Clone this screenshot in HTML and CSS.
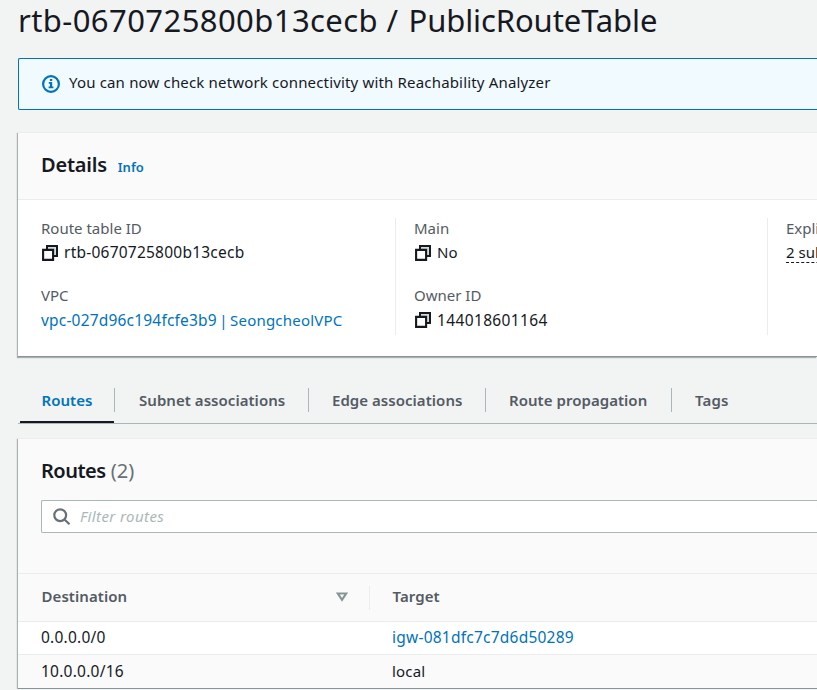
FILE: index.html
```html
<!DOCTYPE html>
<html lang="en">
<head>
<meta charset="utf-8">
<title>PublicRouteTable</title>
<link rel="stylesheet" href="styles.css">
</head>
<body>
<svg class="defs" aria-hidden="true">
  <symbol id="copy" viewBox="0 0 16 16"><path d="M5 4.5V1h10v10h-3.500" fill="#d5dbdb" stroke="currentColor" stroke-width="2"/><path d="M1.1 4.900h10v10h-10z" fill="#fff" stroke="currentColor" stroke-width="2.1"/></symbol>
</svg>
<main class="page">
  <h1 class="title"><span class="t-title-id">rtb-0670725800b13cecb /</span> <span class="t-title-name">PublicRouteTable</span></h1>

  <section class="flash">
    <svg class="flash-icon" viewBox="0 0 18 18"><circle cx="9" cy="9" r="7.9" fill="none" stroke="currentColor" stroke-width="2.2"/><path d="M7.9 4h2.3v2.1H7.9zM6.8 7.1h3.4v4.4h1.2v1.7H6.6v-1.7h1.3V8.8H6.8z" fill="currentColor"/></svg>
    <span class="t-flash">You can now check network connectivity with Reachability Analyzer</span>
  </section>

  <section class="panel details">
    <header class="details-head">
      <h2><span class="t-details">Details</span></h2>
      <a class="info">Info</a>
    </header>
    <div class="columns">
      <div class="column">
        <div class="pair"><div class="label t-rtid">Route table ID</div><div class="value"><svg class="copy"><use href="#copy"/></svg><span class="ident">rtb-0670725800b13cecb</span></div></div>
        <div class="pair"><div class="label">VPC</div><div class="value"><a class="t-vpc"><span class="ident">vpc-027d96c194fcfe3b9</span> | SeongcheolVPC</a></div></div>
      </div>
      <div class="column">
        <div class="pair"><div class="label">Main</div><div class="value"><svg class="copy"><use href="#copy"/></svg><span class="t-no">No</span></div></div>
        <div class="pair"><div class="label">Owner ID</div><div class="value"><svg class="copy"><use href="#copy"/></svg><span class="ident t-num">144018601164</span></div></div>
      </div>
      <div class="column">
        <div class="pair"><div class="label">Explicit subnet associations</div><div class="value"><span class="dashed">2 subnets</span></div></div>
      </div>
    </div>
  </section>

  <nav class="tabs">
    <a class="tab tab-routes active"><span>Routes</span></a>
    <a class="tab tab-subnet"><span>Subnet associations</span></a>
    <a class="tab tab-edge"><span>Edge associations</span></a>
    <a class="tab tab-prop"><span>Route propagation</span></a>
    <a class="tab tab-tags"><span>Tags</span></a>
  </nav>

  <section class="panel routes">
    <header class="routes-head">
      <h2><span class="t-routes">Routes</span> <span class="count">(2)</span></h2>
      <div class="filter">
        <svg class="search" viewBox="0 0 18 18"><circle cx="7.2" cy="7.2" r="5.9"/><path d="M11.5 11.5l5 4.8"/></svg>
        <span class="placeholder">Filter routes</span>
      </div>
    </header>
    <div class="row head">
      <div class="cell first"><span>Destination</span><svg class="sort" viewBox="0 0 12 10"><path d="M1.8 1.5h8.4L6 7.8z"/></svg></div>
      <div class="cell"><span class="t-target">Target</span></div>
    </div>
    <div class="row one"><div class="cell first"><span class="ident">0.0.0.0/0</span></div><div class="cell"><a class="ident">igw-081dfc7c7d6d50289</a></div></div>
    <div class="row two"><div class="cell first"><span class="ident">10.0.0.0/16</span></div><div class="cell"><span class="t-local">local</span></div></div>
  </section>
</main>
</body>
</html>
```
FILE: styles.css
```css
* { box-sizing: border-box; }
html { overflow: hidden; }
body {
  margin: 0;
  height: 690px;
  overflow: hidden;
  background: #f2f3f3;
  color: #16191f;
  font: 15px/22px "Noto Sans", sans-serif;
  white-space: nowrap;
}
h1, h2 { margin: 0; }
a { color: #0073bb; }
.defs { display: block; width: 0; height: 0; }
.page { width: 100%; padding-left: 18px; overflow: hidden; }

.title { height: 58px; font-size: 31px; font-weight: 400; line-height: 41px; }
.t-title-id { letter-spacing: 0.42px; }
.t-title-name { margin-left: 2px; letter-spacing: -0.1px; }
.flash {
  display: flex;
  align-items: flex-start;
  height: 52px;
  padding: 14px 23px;
  border: 1px solid #0073bb;
  border-right: 0;
  border-radius: 2px 0 0 2px;
  background: #f1faff;
}
.flash-icon { width: 18px; height: 18px; margin: 2px 9px 0 0; color: #0073bb; }
.t-flash { line-height: 18px; letter-spacing: 0.17px; }

.panel {
  border-top: 1px solid #eaeded;
  box-shadow: -1px 1px 1px rgba(0, 28, 36, 0.3);
  background: #fff;
}
.details { height: 225px; margin-top: 22px; border-bottom: 1px solid #879596; }
.details-head {
  display: flex;
  height: 67px;
  padding: 17px 23px;
  border-bottom: 1px solid #eaeded;
  background: #fafafa;
}
h2 { font-size: 20px; line-height: 30px; font-weight: 600; }
.t-details { letter-spacing: -0.22px; }
.info { margin: 6px 0 0 11px; font-size: 13px; font-weight: 600; }
.columns { display: flex; padding-top: 18px; overflow: hidden; }
.column { flex: none; height: 117px; width: 372px; padding-left: 18px; border-left: 1px solid #eaeded; }
.column:first-child { width: 377px; padding-left: 23px; border: 0; }
.column:last-child { width: 50px; overflow: hidden; }
.pair { height: 67px; }
.label { height: 24px; line-height: 20px; color: #545b64; }
.value { display: flex; align-items: center; height: 24px; line-height: 20px; padding-bottom: 2px; }
.pair:first-child .value { padding-bottom: 3px; }
.pair:first-child .value span:not(.dashed) { margin-top: -2px; }
.copy { width: 16px; height: 16px; margin: 0 6px 0 1px; }
.ident { font-size: 15.5px; letter-spacing: 0.23px; }
.ident.t-num { letter-spacing: 0.36px; }
.t-vpc { letter-spacing: 0.2px; word-spacing: -1.7px; }
.t-vpc .ident { letter-spacing: 0.19px; }
.dashed { height: 21px; border-bottom: 1px dashed #16191f; }

.tabs { display: flex; height: 67px; padding: 31px 0 0 2px; border-bottom: 1px solid #aab7b8; font-weight: 600; }
.tab { height: 35px; color: #545b64; }
.tab span { display: block; height: 24px; line-height: 24px; padding-left: 23px; border-right: 1px solid #aab7b8; letter-spacing: 0.04px; }
.tab-routes { width: 95px; }
.tab-routes span { padding-left: 21.5px; }
.tab-subnet { width: 194px; }
.tab-subnet span { padding-left: 24px; }
.tab-edge { width: 177px; }
.tab-prop { width: 186px; }
.tab-tags span { border: 0; letter-spacing: 0.2px; }
.tab.active { color: #0073bb; background: linear-gradient(#16191f, #16191f) 0 33px / 94px 2px no-repeat; }

.routes { height: 251px; margin-top: 14px; border-bottom: 1px solid #879596; }
.routes-head { height: 134px; padding: 17px 0 0 23px; background: #fafafa; }
.t-routes { letter-spacing: -0.5px; }
.count { color: #687078; font-weight: 400; }
.filter {
  display: flex;
  align-items: center;
  height: 33px;
  margin-top: 14px;
  padding-left: 11px;
  border: 1px solid #aab7b8;
  border-right: 0;
  border-radius: 2px 0 0 2px;
  background: #fff;
}
.search { width: 18px; height: 18px; margin-right: 9px; fill: none; stroke: #687078; stroke-width: 2.2; }
.placeholder { height: 24px; line-height: 22px; color: #aab7b8; font-style: italic; letter-spacing: 0.4px; }
.row { display: flex; align-items: center; border-top: 1px solid #eaeded; }
.head { height: 48px; background: #fafafa; color: #545b64; font-weight: 600; }
.cell { display: flex; align-items: center; padding-left: 23px; }
.cell span, .cell a { height: 24px; line-height: 22px; }
.first { width: 351px; }
.head .first { width: 352px; height: 24px; padding-left: 23.5px; padding-right: 21px; border-right: 1px solid #eaeded; justify-content: space-between; }
.row.head span { height: 24px; line-height: 20px; letter-spacing: 0.07px; }
.head .cell + .cell { padding-left: 22.5px; }
.sort { width: 12px; height: 10px; margin-top: -1px; fill: none; stroke: #879596; stroke-width: 2.2; }
.one { height: 33px; }
.two { height: 34px; background: #fafafa; }
.t-local { letter-spacing: 0.2px; }
```
